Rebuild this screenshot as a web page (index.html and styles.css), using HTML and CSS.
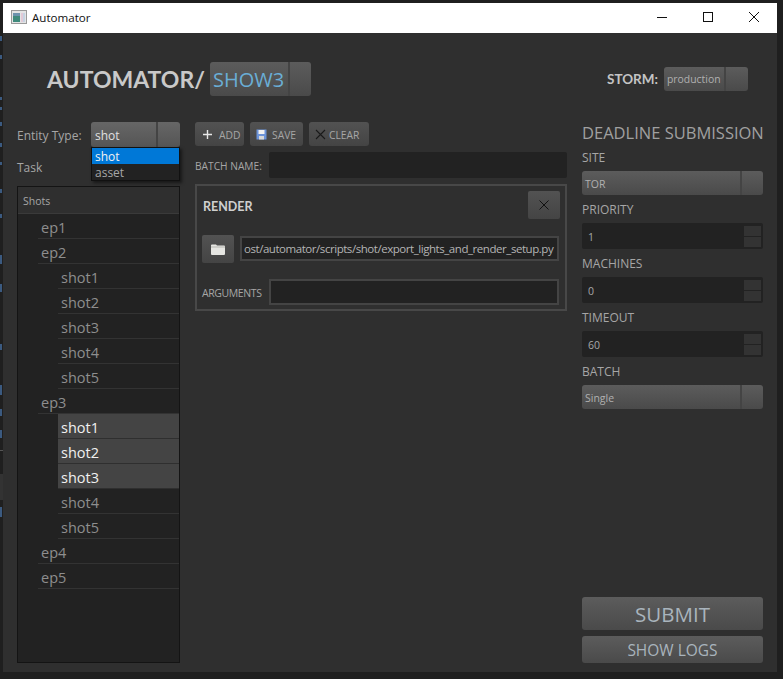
FILE: index.html
```html
<!DOCTYPE html>
<html lang="en">
  <head>
    <meta charset="UTF-8" />
    <meta name="viewport" content="width=device-width, initial-scale=1.0" />
    <title>Automator</title>
    <link rel="stylesheet" href="styles.css">
  </head>
  <body>
    <!-- bits of the desktop showing beside the window -->
    <svg class="desktop-bits" width="3" height="679" viewBox="0 0 3 679">
      <g fill="#3b5a80">
        <rect x="0" y="36" width="2" height="5"/>
        <rect x="0" y="55" width="2" height="4"/>
        <rect x="0" y="97" width="2" height="3"/>
        <rect x="0" y="107" width="2" height="3"/>
        <rect x="0" y="122" width="2" height="4"/>
        <rect x="0" y="143" width="2" height="4"/>
        <rect x="0" y="162" width="2" height="3"/>
        <rect x="0" y="189" width="2" height="4"/>
        <rect x="0" y="214" width="2" height="4"/>
        <rect x="0" y="255" width="2" height="9"/>
        <rect x="0" y="284" width="2" height="8"/>
        <rect x="0" y="344" width="2" height="6"/>
        <rect x="0" y="385" width="2" height="10"/>
        <rect x="0" y="409" width="2" height="7"/>
        <rect x="0" y="430" width="2" height="8"/>
        <rect x="0" y="507" width="2" height="10"/>
      </g>
      <rect x="0" y="450" width="3" height="1" fill="#555"/>
      <rect x="0" y="474" width="3" height="26" fill="#333"/>
    </svg>

    <div class="window">
      <div class="titlebar">
        <svg class="app-icon" width="16" height="14" viewBox="0 0 16 14">
          <rect x="0.5" y="0.5" width="15" height="13" fill="#e4e4e4" stroke="#9a9a9a"/>
          <rect x="2" y="3" width="7" height="9" fill="#3f8a7c"/>
          <rect x="2" y="3" width="7" height="3" fill="#6d93ad"/>
          <rect x="10" y="3" width="2" height="9" fill="#e2c9d6"/>
          <rect x="12" y="3" width="2" height="9" fill="#c6d3e2"/>
        </svg>
        <span class="title-text">Automator</span>
        <div class="win-controls">
          <svg width="10" height="10" viewBox="0 0 10 10"><path d="M0 5.5H10" stroke="#111" fill="none"/></svg>
          <svg width="10" height="10" viewBox="0 0 10 10"><rect x="0.5" y="0.5" width="9" height="9" stroke="#111" fill="none"/></svg>
          <svg width="10" height="10" viewBox="0 0 10 10"><path d="M0 0L10 10M10 0L0 10" stroke="#111" fill="none"/></svg>
        </div>
      </div>

      <div class="content">
        <header class="top">
          <h1 class="brand">AUTOMATOR/</h1>
          <div class="combo combo-show"><span class="combo-text">SHOW3</span><span class="combo-arrow"></span></div>
          <div class="storm">
            <span class="storm-label">STORM:</span>
            <div class="combo combo-storm"><span class="combo-text">production</span><span class="combo-arrow"></span></div>
          </div>
        </header>

        <main class="columns">
          <!-- left: entity picker and tree -->
          <section class="left">
            <div class="entity-row">
              <label class="entity-label">Entity Type:</label>
              <div class="combo combo-entity">
                <span class="combo-text">shot</span><span class="combo-arrow"></span>
                <ul class="popup">
                  <li class="popup-item active">shot</li>
                  <li class="popup-item">asset</li>
                </ul>
              </div>
            </div>
            <div class="task-label">Task</div>
            <div class="tree">
              <div class="tree-head">Shots</div>
              <ul class="tree-list">
                <li class="tree-row">ep1</li>
                <li class="tree-row">ep2</li>
                <li>
                  <ul class="tree-sub">
                    <li class="tree-row">shot1</li>
                    <li class="tree-row">shot2</li>
                    <li class="tree-row">shot3</li>
                    <li class="tree-row">shot4</li>
                    <li class="tree-row">shot5</li>
                  </ul>
                </li>
                <li class="tree-row">ep3</li>
                <li>
                  <ul class="tree-sub">
                    <li class="tree-row selected">shot1</li>
                    <li class="tree-row selected">shot2</li>
                    <li class="tree-row selected">shot3</li>
                    <li class="tree-row">shot4</li>
                    <li class="tree-row">shot5</li>
                  </ul>
                </li>
                <li class="tree-row">ep4</li>
                <li class="tree-row">ep5</li>
              </ul>
            </div>
          </section>

          <!-- middle: batch and tasks -->
          <section class="middle">
            <div class="toolbar">
              <button class="tool-btn btn-add">
                <svg width="11" height="11" viewBox="0 0 11 11"><path d="M5.5 1V10M1 5.5H10" stroke="#e8e8e8" stroke-width="1.4" fill="none"/></svg>
                <span>ADD</span>
              </button>
              <button class="tool-btn btn-save">
                <svg width="11" height="11" viewBox="0 0 11 11">
                  <rect x="0.5" y="0.5" width="10" height="10" fill="#6c93d8"/>
                  <rect x="2.5" y="1" width="6" height="4" fill="#f2f2f2"/>
                  <rect x="3" y="7" width="5" height="3.5" fill="#d8d8d8"/>
                </svg>
                <span>SAVE</span>
              </button>
              <button class="tool-btn btn-clear">
                <svg width="11" height="11" viewBox="0 0 11 11"><path d="M1 1L10 10M10 1L1 10" stroke="#1a1a1a" stroke-width="1.1" fill="none"/></svg>
                <span>CLEAR</span>
              </button>
            </div>
            <div class="batch-row">
              <label class="batch-label">BATCH NAME:</label>
              <div class="field batch-field"></div>
            </div>
            <div class="render-box">
              <div class="render-head">
                <span class="render-title">RENDER</span>
                <button class="close-btn">
                  <svg width="10" height="10" viewBox="0 0 10 10"><path d="M0.5 0.5L9.5 9.5M9.5 0.5L0.5 9.5" stroke="#111" fill="none"/></svg>
                </button>
              </div>
              <div class="path-row">
                <button class="folder-btn">
                  <svg width="14" height="11" viewBox="0 0 14 11"><path d="M0 1.5Q0 0.5 1 0.5H5L6 1.5H13Q14 1.5 14 2.5V10Q14 11 13 11H1Q0 11 0 10Z" fill="#e6e6e2"/><path d="M0 3H14" stroke="#b5b5b0" fill="none"/></svg>
                </button>
                <div class="field boxed path-field">ost/automator/scripts/shot/export_lights_and_render_setup.py</div>
              </div>
              <div class="args-row">
                <label class="args-label">ARGUMENTS</label>
                <div class="field boxed args-field"></div>
              </div>
            </div>
          </section>

          <!-- right: deadline options -->
          <section class="right">
            <h2 class="deadline-title">DEADLINE SUBMISSION</h2>
            <label class="opt-label">SITE</label>
            <div class="combo combo-opt"><span class="combo-text">TOR</span><span class="combo-arrow"></span></div>
            <label class="opt-label">PRIORITY</label>
            <div class="spin"><span class="spin-val">1</span><span class="spin-btns"><i></i><i></i></span></div>
            <label class="opt-label">MACHINES</label>
            <div class="spin"><span class="spin-val">0</span><span class="spin-btns"><i></i><i></i></span></div>
            <label class="opt-label">TIMEOUT</label>
            <div class="spin"><span class="spin-val">60</span><span class="spin-btns"><i></i><i></i></span></div>
            <label class="opt-label">BATCH</label>
            <div class="combo combo-opt"><span class="combo-text">Single</span><span class="combo-arrow"></span></div>
            <button class="action-btn btn-submit">SUBMIT</button>
            <button class="action-btn btn-logs">SHOW LOGS</button>
          </section>
        </main>
      </div>
    </div>
  </body>
</html>
```

FILE: styles.css
```css
html,
body {
  height: 100%;
}

body {
  margin: 0;
  padding: 3px 6px 7px 3px;
  box-sizing: border-box;
  background: #1f1f1f;
  overflow: hidden;
  font-family: "Open Sans", "Noto Sans", sans-serif;
  font-size: 12px;
  color: #a6a6a6;
}

ul {
  list-style: none;
  margin: 0;
  padding: 0;
}

button {
  font-family: inherit;
  padding: 0;
  border: 0;
  cursor: pointer;
}

.desktop-bits {
  position: absolute;
  left: 0;
  top: 0;
}

.window {
  height: 669px;
  display: flex;
  flex-direction: column;
  background: #2f2f2f;
}

/* title bar */
.titlebar {
  height: 30px;
  flex: none;
  display: flex;
  align-items: center;
  background: #fff;
  color: #111;
  padding-left: 8px;
}

.app-icon {
  margin-top: -2px;
}

.title-text {
  margin-left: 5px;
  font-size: 11.6px;
  margin-top: -1px;
}

.win-controls {
  margin-left: auto;
  margin-right: 18px;
  display: flex;
  gap: 36px;
  margin-top: -2px;
}

/* header */
.content {
  flex: 1;
  display: flex;
  flex-direction: column;
  padding: 29px 14px 9px;
}

.top {
  height: 34px;
  display: flex;
  align-items: center;
  padding-left: 30px;
  margin-bottom: 26px;
}

.brand {
  margin: 0 6px 0 0;
  font-family: Lato, sans-serif;
  font-size: 23px;
  font-weight: 700;
  color: #c9c9c9;
  width: 157px;
  white-space: nowrap;
}

.storm {
  margin-left: auto;
  margin-right: 15px;
  display: flex;
  align-items: center;
  gap: 6px;
}

.storm-label {
  font-family: Lato, sans-serif;
  font-weight: 700;
  font-size: 13.5px;
  color: #c4c4c4;
}

/* combos */
.combo {
  position: relative;
  display: flex;
  border-radius: 3px;
  background: linear-gradient(#5c5c5c, #4a4a4a);
  color: #b0b0b0;
}

.combo-text {
  flex: 1;
  display: flex;
  align-items: center;
  padding-left: 3px;
  white-space: nowrap;
}

.combo-arrow {
  flex: none;
  border-left: 2px solid #444;
}

.combo-show {
  width: 101px;
  height: 34px;
}

.combo-show .combo-text {
  font-size: 20px;
  color: #6aaed6;
}

.combo-show .combo-arrow {
  width: 21px;
}

.combo-storm {
  width: 84px;
  height: 24px;
  font-size: 10.4px;
}

.combo-storm .combo-arrow {
  width: 22px;
}

.combo-entity {
  width: 89px;
  height: 25px;
  background: linear-gradient(#666, #555);
  color: #e0e0e0;
}

.combo-entity .combo-text {
  font-size: 12px;
  padding: 2px 0 0 4px;
}

.combo-entity .combo-arrow {
  width: 22px;
}

.combo-opt {
  height: 24px;
  font-size: 10.5px;
  margin-bottom: 3px;
}

.combo-opt .combo-text {
  padding: 2px 0 0 3px;
}

.combo-opt .combo-arrow {
  width: 21px;
}

/* entity popup */
.popup {
  position: absolute;
  left: 0;
  top: 25px;
  width: 87px;
  border: 1px solid #111;
  background: #222;
  box-shadow: 2px 2px 3px rgba(0, 0, 0, 0.5);
  z-index: 2;
}

.popup-item {
  height: 16px;
  line-height: 18px;
  padding-left: 3px;
  font-size: 12px;
  color: #a6a6a6;
}

.popup-item.active {
  background: #0078d7;
  color: #f2f2f2;
}

/* columns */
.columns {
  flex: 1;
  min-height: 0;
  display: grid;
  grid-template-columns: 163px 372px 181px;
  gap: 15px;
}

.left {
  display: flex;
  flex-direction: column;
  min-height: 0;
}

.entity-row {
  display: flex;
  align-items: center;
  justify-content: space-between;
  height: 25px;
}

.entity-label {
  font-size: 12px;
  margin-top: 2px;
}

.task-label {
  height: 39px;
  line-height: 42px;
  font-size: 12px;
}

.tree {
  flex: 1;
  background: #222;
  border: 1px solid #141414;
}

.tree-head {
  height: 26px;
  line-height: 28px;
  padding-left: 5px;
  font-size: 10.5px;
  background: #2f2f2f;
  border-bottom: 1px solid #3a3a3a;
}

.tree-list {
  padding-left: 20px;
}

.tree-sub {
  padding-left: 20px;
}

.tree-row {
  height: 24px;
  line-height: 28px;
  padding-left: 3px;
  font-size: 14.5px;
  color: #8e8e8e;
  border-bottom: 1px solid #333;
}

.tree-row.selected {
  background: #444;
  color: #f0f0f0;
  border-bottom-color: #2f2f2f;
}

/* middle */
.toolbar {
  display: flex;
  gap: 6px;
  height: 24px;
  margin-bottom: 6px;
}

.tool-btn {
  height: 24px;
  display: flex;
  align-items: center;
  border-radius: 3px;
  background: linear-gradient(#525252, #444);
  color: #a6a6a6;
  font-size: 10.3px;
}

.tool-btn span {
  margin-top: 2px;
}

.btn-add {
  width: 49px;
  padding-left: 7px;
  gap: 6px;
}

.btn-save {
  width: 53px;
  padding-left: 6px;
  gap: 5px;
}

.btn-clear {
  width: 60px;
  padding-left: 6px;
  gap: 3px;
}

.field {
  background: #222;
  border-radius: 2px;
  box-sizing: border-box;
}

.boxed {
  border: 2px solid #444;
  border-radius: 0;
}

.batch-row {
  display: flex;
  align-items: center;
  justify-content: space-between;
  height: 26px;
  margin-bottom: 6px;
}

.batch-label {
  font-size: 10.2px;
  white-space: nowrap;
  margin-top: 2px;
}

.batch-field {
  width: 298px;
  height: 26px;
}

.render-box {
  height: 127px;
  box-sizing: border-box;
  border: 2px solid #484848;
  padding: 5px 6px 5px 5px;
  display: flex;
  flex-direction: column;
}

.render-head {
  height: 28px;
  display: flex;
  align-items: center;
  justify-content: space-between;
  margin-bottom: 16px;
}

.render-title {
  font-family: Lato, sans-serif;
  font-weight: 700;
  font-size: 12.5px;
  color: #cfcfcf;
  margin: 2px 0 0 1px;
}

.close-btn,
.folder-btn {
  display: flex;
  align-items: center;
  justify-content: center;
  border-radius: 2px;
  background: linear-gradient(#525252, #444);
}

.close-btn {
  width: 32px;
  height: 28px;
  margin-right: -1px;
}

.path-row {
  display: flex;
  gap: 6px;
  height: 28px;
  margin-bottom: 16px;
}

.folder-btn {
  width: 32px;
  height: 28px;
}

.path-field {
  flex: 1;
  height: 25px;
  margin-top: 1px;
  line-height: 21px;
  padding-left: 2px;
  font-size: 11.5px;
  letter-spacing: -0.45px;
  color: #b4b4b4;
  white-space: nowrap;
  overflow: hidden;
}

.args-row {
  display: flex;
  align-items: center;
  justify-content: space-between;
  height: 26px;
}

.args-label {
  font-size: 10.5px;
  letter-spacing: -0.4px;
  margin-top: 2px;
}

.args-field {
  width: 290px;
  height: 26px;
}

/* right */
.right {
  display: flex;
  flex-direction: column;
}

.deadline-title {
  margin: 0;
  height: 24px;
  line-height: 22px;
  font-size: 16.5px;
  font-weight: 400;
  color: #a0a0a0;
  white-space: nowrap;
}

.opt-label {
  display: block;
  height: 25px;
  line-height: 24px;
  font-size: 12px;
  box-sizing: border-box;
}

.spin {
  height: 26px;
  display: flex;
  align-items: center;
  justify-content: space-between;
  background: #222;
  border-radius: 2px;
  padding: 3px 2px 2px 6px;
  box-sizing: border-box;
  margin-bottom: 3px;
  color: #a8a8a8;
  font-size: 10.5px;
}

.spin-val {
  padding-top: 1px;
}

.spin-btns {
  width: 17px;
  height: 21px;
  display: flex;
  flex-direction: column;
  gap: 1px;
}

.spin-btns i {
  flex: 1;
  background: #333;
}

.action-btn {
  border-radius: 3px;
  background: linear-gradient(#5c5c5c, #4a4a4a);
  color: #a9b4bd;
  text-align: center;
}

.btn-submit {
  margin-top: auto;
  height: 33px;
  font-size: 20.5px;
  margin-bottom: 6px;
}

.btn-logs {
  height: 27px;
  font-size: 15.5px;
}
```
